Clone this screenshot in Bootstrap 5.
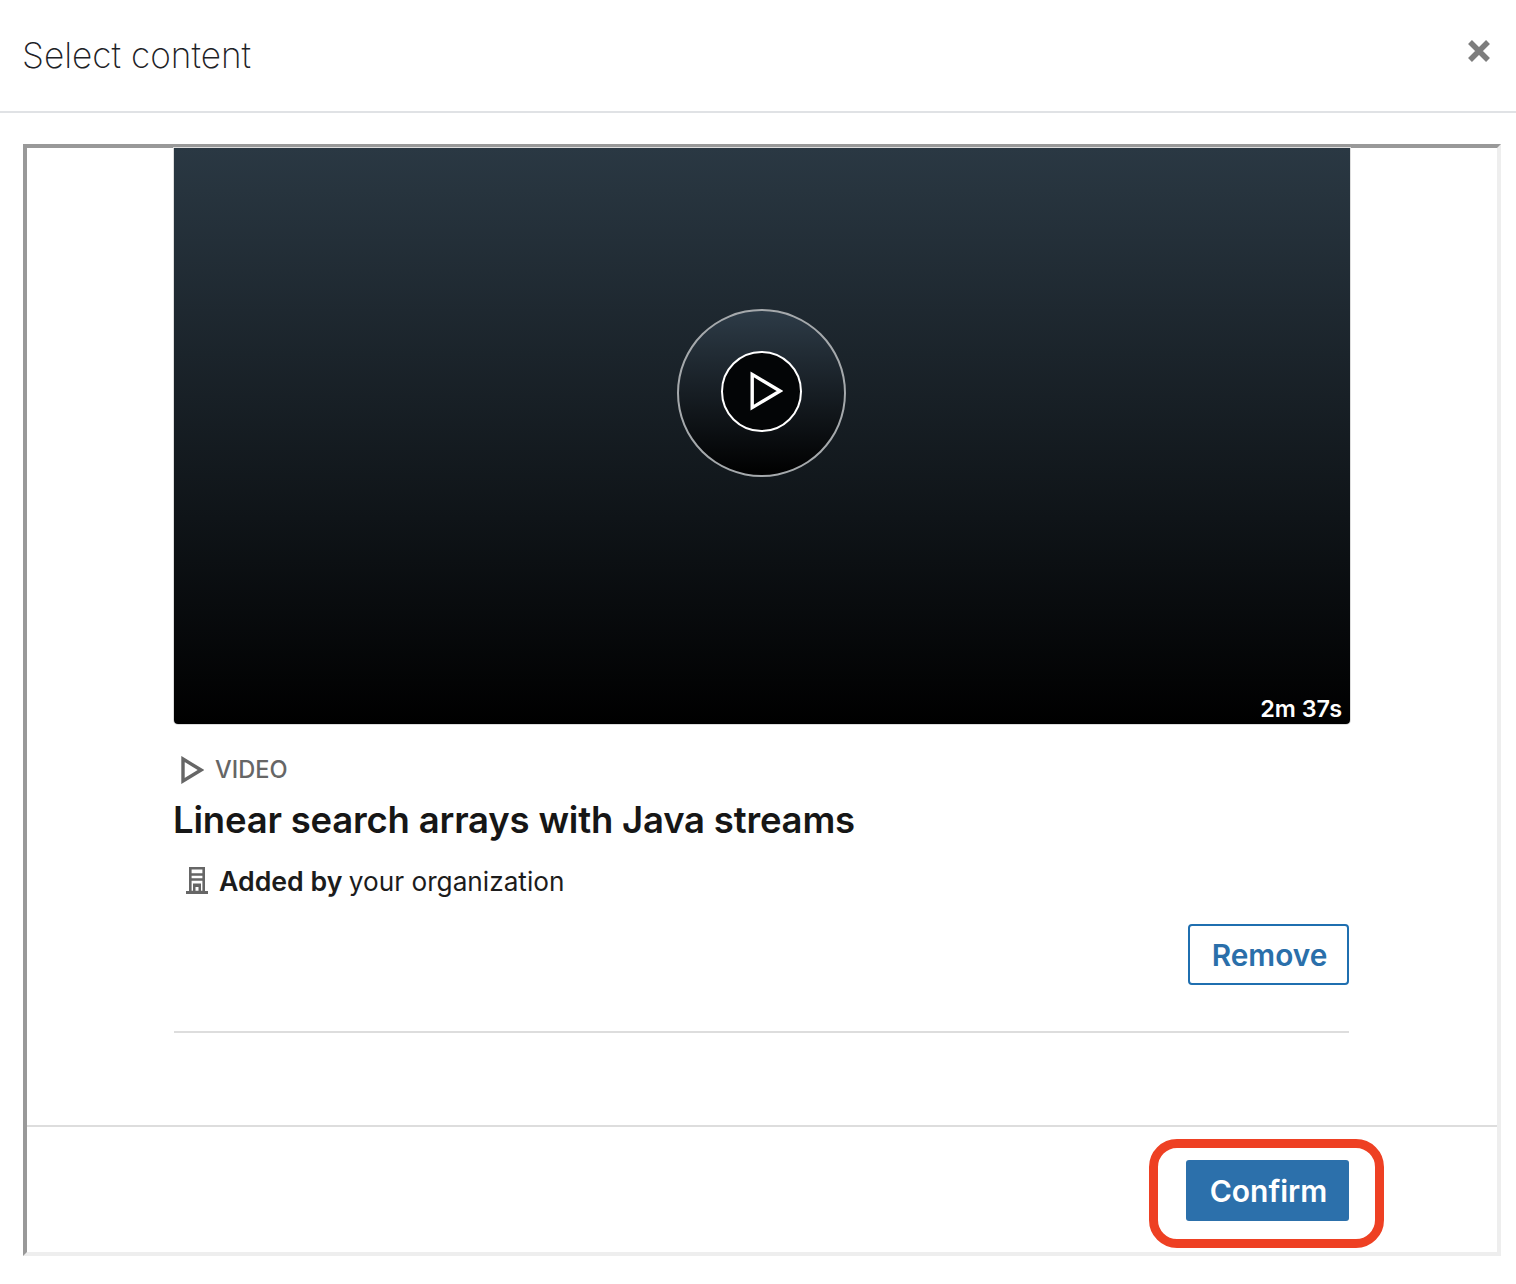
<!DOCTYPE html>
<html lang="en">
<head>
<meta charset="utf-8">
<title>Select content</title>
<link rel="stylesheet" href="https://cdn.jsdelivr.net/npm/bootstrap@5.3.0/dist/css/bootstrap.min.css">
<style>
html,body{background:#fff;font-family:Inter,"Liberation Sans",sans-serif;color:#1a1a1a;margin:0}
.page-wrap{position:relative;width:1516px;height:1284px;overflow:hidden}
.top-head{height:113px;border-bottom:2px solid #e0e2e5;padding:34px 22px 0}
.top-title{font-size:35.2px;font-weight:250;line-height:42px;margin:0;color:#1d2226}
.close-x{position:absolute;left:1467px;top:37px;width:24px;height:24px;padding:0;border:0;background:none}
.frame-box{margin:31px 0 0 23px;width:1478px;height:1112px;border:4px solid;border-color:#999 #eee #eee #999}
.body-area{height:977px;padding:0 147px}
.video-box{height:576px;border-radius:0 0 4px 4px;background:linear-gradient(#2a3843,#000);box-shadow:0 0 0 1px #ddd}
.ring-out{width:169px;height:168px;border-radius:50%;border:2px solid #a5a9ac;background:linear-gradient(#2d3b47,#000);margin:161px 1px 0 0}
.ring-in{width:81px;height:81px;border-radius:50%;border:2px solid #fff;background:#030506;margin:0 1px 4px 0}
.dur{position:absolute;right:8px;bottom:0;color:#fff;font-size:23.4px;font-weight:600;line-height:30px}
.kind-row{height:32px;margin-top:30px;color:#666;font-size:23.6px;font-weight:500;line-height:32px}
.kind-row svg{margin-left:4px}
.kind-row span{margin-left:11px}
.item-title{font-size:36.5px;font-weight:600;line-height:44px;margin:12px 0 0 -1px;color:#161616;letter-spacing:-.2px}
.added-row{height:36px;margin-top:21px;font-size:26.7px;line-height:36px;color:#1c1c1c}
.added-row svg{margin-left:10px}
.added-row .who{margin-left:9px}
.added-row b{font-weight:600}
.added-row i{font-style:normal;font-size:26.2px;margin-left:-1px}
.remove-btn{width:161px;height:61px;border:2px solid #1f6fb0;border-radius:4px;color:#2a6faa;font-size:29.8px;font-weight:600;padding:2px 0 0 2px;background:#fff;margin:25px 1px 0 0}
.rule-line{height:2px;background:#ddd;margin:46px 1px 0 0}
.foot-area{border-top:2px solid #ddd;height:127px;padding:33px 148px 0 0}
.confirm-btn{width:163px;height:61px;border:0;border-radius:3px;background:#2c70ab;color:#fff;font-size:30px;font-weight:600;padding:1px 0 0 2px}
.red-box{position:absolute;left:1149px;top:1139px;width:235px;height:109px;border:9px solid #ee4023;border-radius:28px;pointer-events:none}
</style>
</head>
<body>
<div class="page-wrap">
  <header class="top-head">
    <h1 class="top-title">Select content</h1>
    <button class="close-x" type="button" aria-label="Close">
      <svg width="24" height="24" viewBox="0 0 24 24"><path d="M3 3 L21 21 M21 3 L3 21" stroke="#7d7d7d" stroke-width="5.5" fill="none"/></svg>
    </button>
  </header>
  <main class="frame-box">
    <div class="body-area">
      <div class="video-box position-relative d-flex justify-content-center">
        <div class="ring-out d-flex align-items-center justify-content-center">
          <div class="ring-in d-flex align-items-center justify-content-center">
            <svg width="44" height="44" viewBox="0 0 44 44"><path d="M13.200 5.400 L41 22 L13.200 38.600 Z" stroke="#fff" stroke-width="3.4" fill="none"/></svg>
          </div>
        </div>
        <span class="dur">2m 37s</span>
      </div>
      <div class="kind-row d-flex align-items-center">
        <svg width="26" height="28" viewBox="0 0 26 28"><path d="M5 3 L23 14 L5 25 Z" stroke="#666" stroke-width="3.4" fill="none"/></svg>
        <span>VIDEO</span>
      </div>
      <h2 class="item-title">Linear search arrays with Java streams</h2>
      <div class="added-row d-flex align-items-center">
        <svg width="26" height="28" viewBox="0 0 26 28"><path d="M6.300 1.300 H19.700 V25 H6.300 Z M6 7.500 H20 M6 12.500 H20" stroke="#666" stroke-width="2.600" fill="none"/><path d="M2 24 H24 V27 H2 Z M9 16.500 H17 V24 H14.500 V20 H11.500 V24 H9 Z" fill="#666"/></svg>
        <span class="who"><b>Added by</b> <i>your organization</i></span>
      </div>
      <div class="d-flex justify-content-end">
        <button class="btn remove-btn" type="button">Remove</button>
      </div>
      <div class="rule-line"></div>
    </div>
    <div class="foot-area d-flex justify-content-end align-items-start">
      <button class="btn confirm-btn" type="button">Confirm</button>
    </div>
  </main>
  <div class="red-box"></div>
</div>
<script src="https://cdn.jsdelivr.net/npm/bootstrap@5.3.0/dist/js/bootstrap.bundle.min.js"></script>
</body>
</html>
